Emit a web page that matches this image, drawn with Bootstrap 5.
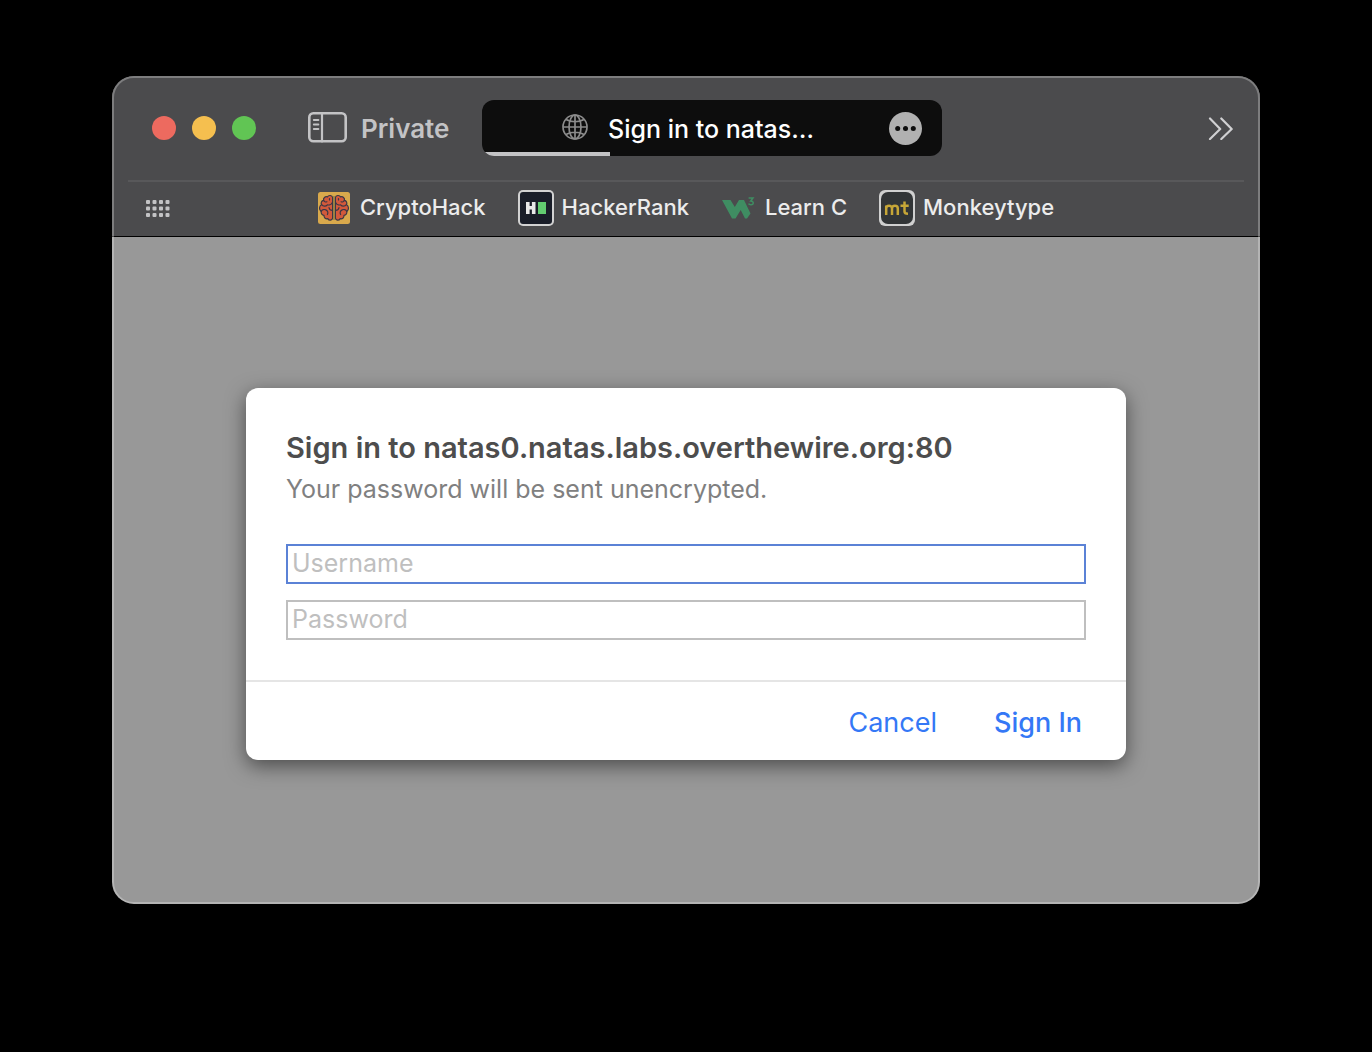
<!DOCTYPE html>
<html lang="en">
<head>
<meta charset="utf-8">
<meta name="viewport" content="width=device-width, initial-scale=1">
<title>Sign in to natas0.natas.labs.overthewire.org</title>
<link href="https://cdn.jsdelivr.net/npm/bootstrap@5.3.0/dist/css/bootstrap.min.css" rel="stylesheet">
<style>
  body { background: #000; font-family: Inter, "Liberation Sans", sans-serif; padding: 76px 112px 148px; }
  svg { display: block; flex: none; }
  .browser { border-radius: 22px; background: #989898; }
  /* translucent window edge, drawn over the toolbar and the page alike */
  .browser::after { content: ""; position: absolute; inset: 0; border: 2px solid rgba(255,255,255,.28); border-radius: 22px; pointer-events: none; }
  .chrome { background: #4b4b4d; border-bottom: 1px solid #000; }
  .toolbar { padding: 24px 26px 24px 40px; }
  .lights { gap: 16px; }
  .light { width: 24px; height: 24px; border-radius: 50%; border: 0; padding: 0; }
  .light-close { background: #ed6a5f; }
  .light-min { background: #f5bf4f; }
  .light-max { background: #61c554; }
  .side-toggle { margin-left: 52px; }
  .private-label { color: #c3c3c5; font-size: 26px; line-height: 32px; font-weight: 600; margin-left: 14px; padding-top: 2px; width: 121px; }
  .tab { width: 460px; height: 56px; background: #0d0d0d; border-radius: 12px; padding: 0 20px 0 80px; }
  .tab-title { color: #fff; font-size: 25px; line-height: 32px; font-weight: 500; margin-left: 20px; padding-top: 2px; }
  .tab-progress { left: 0; bottom: 0; width: 128px; height: 4px; background: #c3c3c5; }
  .rule { height: 2px; margin: 0 16px; background: #58585a; }
  .bookmarks { display: grid; grid-template-columns: 1fr auto 1fr; padding: 8px 34px 10px; }
  .marks { gap: 32px; }
  .mark-link { color: #ececec; font-size: 22px; line-height: 34px; font-weight: 500; gap: 8px; }
  .mark-link:hover { color: #fff; }
  .mark-box { height: 36px; display: flex; align-items: center; }
  .viewport { padding: 151px 134px 144px; }
  .dialog { background: #fff; border-radius: 12px; box-shadow: 0 6px 20px rgba(0,0,0,.5); }
  .dialog-body { padding: 40px; }
  .dialog h1 { color: #4d4d4d; font-size: 29px; line-height: 40px; font-weight: 600; margin: 0; }
  .dialog p { color: #808080; font-size: 25px; line-height: 40px; margin: 1px 0 35px; }
  .field { width: 100%; height: 40px; border: 2px solid #bfbfbf; padding: 0 4px 2px; font-size: 25px; line-height: 34px; color: #333; display: block; outline: 0; background: #fff; }
  .field::placeholder { color: #bfbfbf; opacity: 1; }
  .field-active { border-color: #5b82d6; }
  .dialog-foot { border-top: 2px solid #e5e5e5; padding: 21px 44px 17px; gap: 57px; }
  .dialog-foot button { color: #3478f6; font-size: 27px; line-height: 40px; border: 0; padding: 0; background: none; }
  .go { font-weight: 500; }
</style>
<script src="https://cdn.jsdelivr.net/npm/bootstrap@5.3.0/dist/js/bootstrap.bundle.min.js"></script>
</head>
<body class="min-vh-100 d-flex flex-column m-0">
<div class="browser flex-grow-1 position-relative overflow-hidden">
  <header class="chrome">
    <div class="toolbar d-flex align-items-center">
      <div class="lights d-flex">
        <button class="light light-close" aria-label="Close"></button>
        <button class="light light-min" aria-label="Minimize"></button>
        <button class="light light-max" aria-label="Zoom"></button>
      </div>
      <button class="side-toggle btn p-0 border-0" aria-label="Show sidebar">
        <svg width="39" height="32" viewBox="0 0 39 32" fill="none" stroke="#c3c3c5" stroke-linecap="round"><rect x="1.3" y="1.3" width="36.4" height="28" rx="4" stroke-width="2.6"/><path d="M14 1.5v28" stroke-width="2.2"/><path d="M5.8 8h4.6M5.8 12.5h4.6M5.8 17h4.6" stroke-width="1.9"/></svg>
      </button>
      <span class="private-label">Private</span>
      <div class="tab d-flex align-items-center position-relative overflow-hidden">
        <svg width="26" height="28" viewBox="0 0 26 28" fill="none" stroke="#8b8b8b" stroke-width="1.7"><circle cx="13" cy="13" r="12"/><ellipse cx="13" cy="13" rx="6" ry="12"/><path d="M13 1v24M1 13h24M4 5.5c5 3 13 3 18 0M4 20.5c5-3 13-3 18 0"/></svg>
        <span class="tab-title">Sign in to natas…</span>
        <button class="btn p-0 border-0 ms-auto" aria-label="Page menu">
          <svg width="33" height="33" viewBox="0 0 33 33"><circle cx="16.5" cy="16.5" r="16.5" fill="#b1b1b1"/><g fill="#0d0d0d"><circle cx="8.7" cy="16.5" r="2.5"/><circle cx="16.5" cy="16.5" r="2.5"/><circle cx="24.3" cy="16.5" r="2.5"/></g></svg>
        </button>
        <div class="tab-progress position-absolute"></div>
      </div>
      <button class="btn p-0 border-0 ms-auto" aria-label="More toolbar items">
        <svg width="26" height="24" viewBox="0 0 26 24" fill="none" stroke="#d0d0d2" stroke-width="2.2" stroke-linecap="round" stroke-linejoin="round"><path d="M2 2.5 12.2 13 2 23M13.300 2.500 23.700 13 13.300 23"/></svg>
      </button>
    </div>
    <div class="rule"></div>
    <nav class="bookmarks align-items-center">
      <button class="btn p-0 border-0 text-start" aria-label="Show favorites">
        <svg width="24" height="18" viewBox="0 0 24 18" fill="#c3c3c5"><g id="dots"><rect x="0" y="1" width="4" height="4" rx="1"/><rect x="6.500" y="1" width="4" height="4" rx="1"/><rect x="13" y="1" width="4" height="4" rx="1"/><rect x="19.500" y="1" width="4" height="4" rx="1"/></g><use href="#dots" y="6.500"/><use href="#dots" y="13"/></svg>
      </button>
      <div class="marks d-flex">
        <a class="mark-link d-flex text-decoration-none" href="#"><span class="mark-box">
          <svg width="34" height="32" viewBox="0 0 34 32"><rect width="32" height="32" rx="2.500" fill="#d9a94c"/><g id="lobe" stroke="#3b3846" stroke-width="1.200" stroke-linejoin="round" stroke-linecap="round"><path fill="#d2593b" d="M14.600 5.500c-.4-2.300-4-2.800-5.200-.6-2.200-.7-4.400 1-3.800 3.400-2 .3-3.100 2.500-2 4.300-2.600 1.700-2.800 5.200-.4 6.800-.4 2.300 1 3.800 2.800 4-.2 2.400 1.800 3.900 3.800 3.200 1.200 2.300 4.400 2 4.800-.4z"/><path fill="none" d="M5.600 8.300c.5 1.400 2 2 3.300 1.500M9.400 12.800c2 .7 4.200-.6 5-2.400M3.600 12.600c1.500 1.900 4.300 2 5.800.2M3.200 19.400c.8-1.700 3-2.400 4.700-1.500 2 1 2.400 2.900 1.500 4.600M11 15.500c.2 1.600 1.500 2.800 3.300 2.900M11.500 8V6.600"/></g><use href="#lobe" transform="matrix(-1 0 0 1 32 0)"/><path d="M16 4v24" stroke="#8b773d" stroke-width="1.300"/></svg></span>CryptoHack</a>
        <a class="mark-link d-flex text-decoration-none" href="#"><span class="mark-box">
          <svg width="36" height="36" viewBox="0 0 36 36"><rect width="36" height="36" rx="5" fill="#d2d2d2"/><rect x="2" y="2" width="32" height="32" rx="3" fill="#191d28"/><path d="M8 12h3.600v4h2.300v-4h3.600v12h-3.600v-4.500h-2.300V24H8z" fill="#e8e8e8"/><path d="M20 12h8v12h-8z" fill="#62cb70"/></svg></span>HackerRank</a>
        <a class="mark-link d-flex text-decoration-none" href="#"><span class="mark-box">
          <svg width="36" height="36" viewBox="0 0 36 36"><path fill="#3f8d62" d="M1 10h8.500l4.300 7 4.200-7h5l6.500 13.500-3.500 5h-2l-4.300-8.500-5.200 8.500h-3.500z"/><path fill="none" stroke="#3f8d62" stroke-width="1.500" d="M27.600 8H32l-2.300 3.100c2 0 2.700 1.100 2.500 2.200-.3 1.900-3.700 2-4.700.4"/></svg></span>Learn C</a>
        <a class="mark-link d-flex text-decoration-none" href="#"><span class="mark-box">
          <svg width="36" height="36" viewBox="0 0 36 36"><rect width="36" height="36" rx="6" fill="#d0d0d0"/><rect x="2" y="2" width="32" height="32" rx="7" fill="#323537"/><path fill="none" stroke="#c6a637" stroke-width="2.500" stroke-linejoin="round" d="M7.200 25v-9.500M7.200 18.500c0-3.600 5.800-3.600 5.800 0V25M13 18.500c0-3.600 5.800-3.600 5.800 0V25M25.500 11.500v9.900c0 1.700.8 2.300 3.500 2.300M21.500 15.800h8.200"/></svg></span>Monkeytype</a>
      </div>
    </nav>
  </header>
  <main class="viewport">
    <form class="dialog">
      <div class="dialog-body">
        <h1>Sign in to natas0.natas.labs.overthewire.org:80</h1>
        <p>Your password will be sent unencrypted.</p>
        <input class="field field-active mb-3" id="username" type="text" placeholder="Username" aria-label="Username">
        <input class="field" id="password" type="password" placeholder="Password" aria-label="Password">
      </div>
      <div class="dialog-foot d-flex justify-content-end">
        <button type="button">Cancel</button>
        <button type="submit" class="go">Sign In</button>
      </div>
    </form>
  </main>
</div>
</body>
</html>
